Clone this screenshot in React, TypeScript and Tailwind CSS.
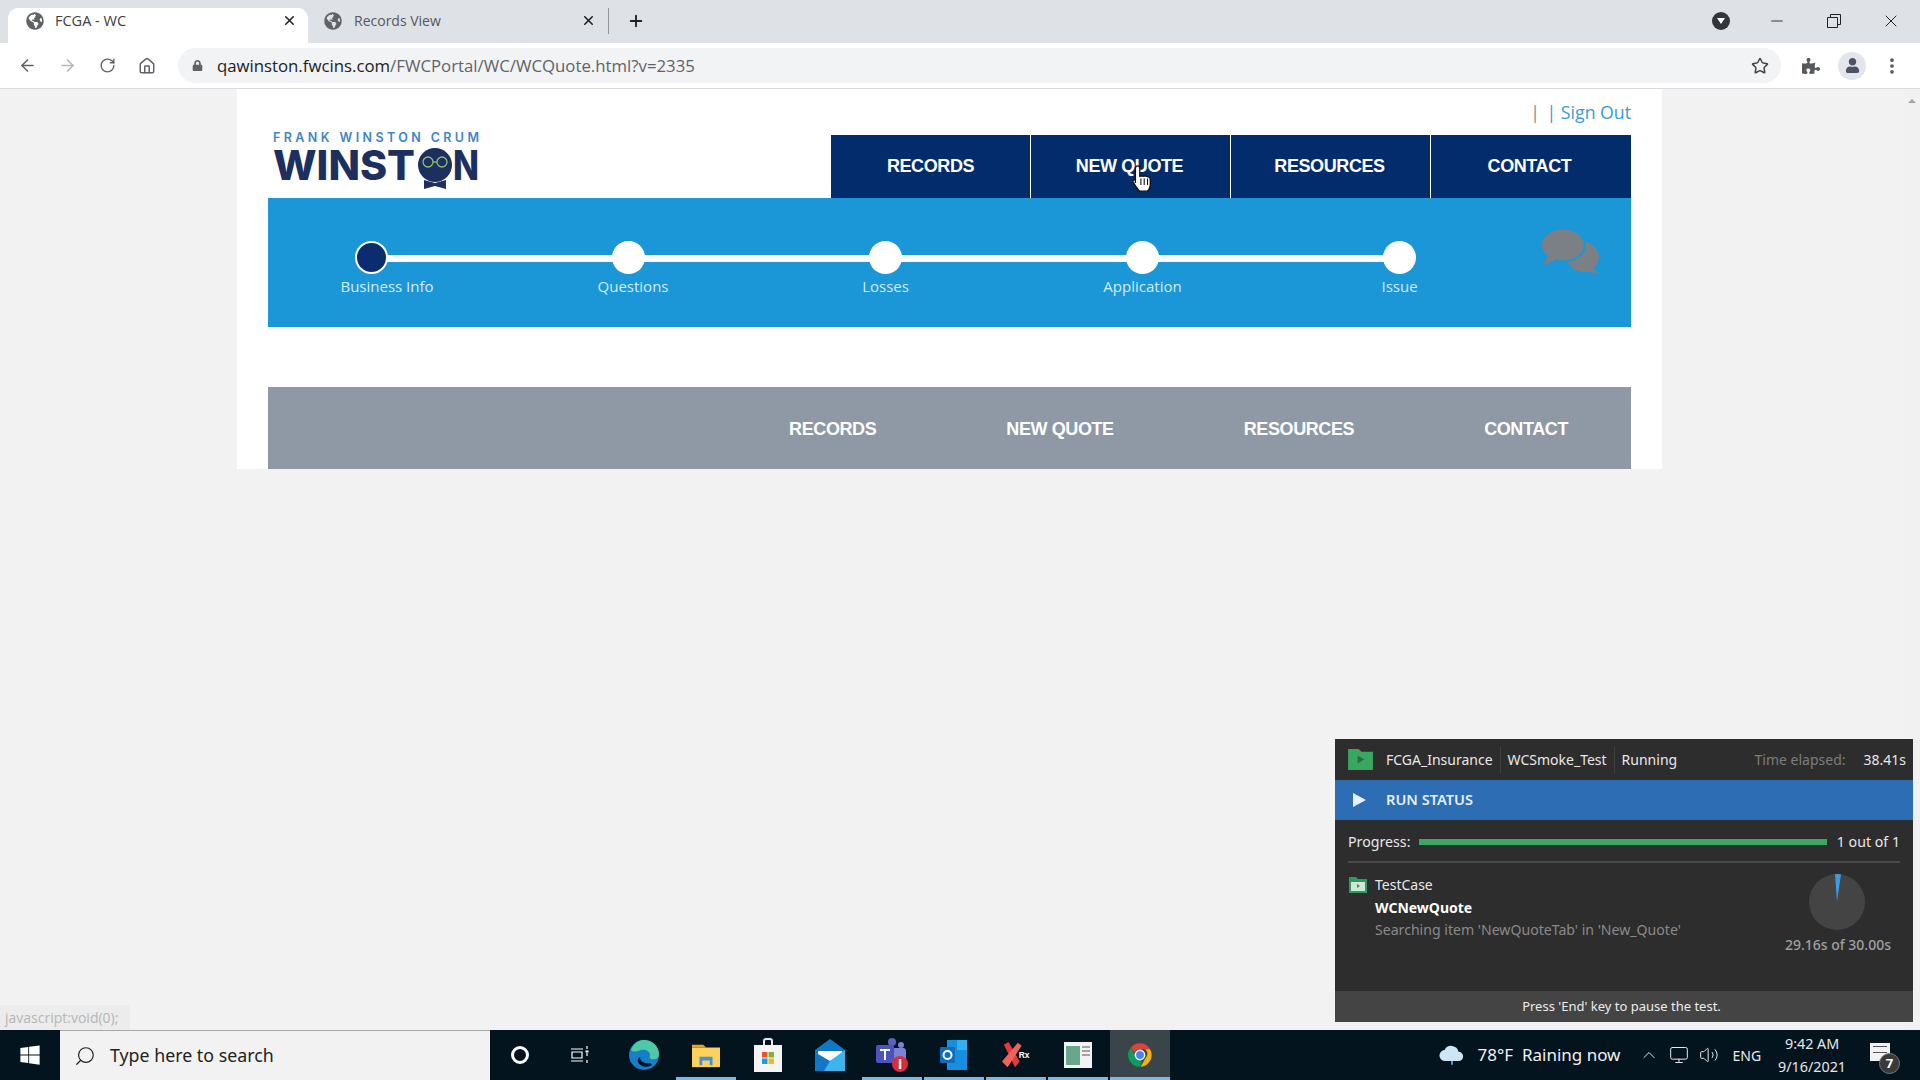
import { ArrowLeft, ArrowRight, ChevronUp, EllipsisVertical, House, Minus, Monitor, Plus, RotateCw, Search, Star, Volume2, X } from 'lucide-react'
import { FaGlobeAmericas, FaLock, FaPuzzlePiece, FaUser, FaWindows } from 'react-icons/fa'

const navItems = ['RECORDS', 'NEW QUOTE', 'RESOURCES', 'CONTACT']
const steps = ['Business Info', 'Questions', 'Losses', 'Application', 'Issue']

function BrowserChrome() {
  return (
    <div className="shrink-0 font-['Open_Sans',sans-serif]">
      <div className="h-[43px] bg-[#dee1e6] flex items-end pl-[8px] pr-[19px]">
        <div className="w-[300px] h-[35px] bg-white rounded-t-[10px] flex items-center pl-[18px] pr-[11px] pb-[10px] pt-0 text-[14.5px] text-[#3c4043]">
          <FaGlobeAmericas className="w-[18px] h-[18px] text-[#5f6368]" />
          <span className="ml-[11px]">FCGA - WC</span>
          <X className="w-[15px] h-[15px] ml-auto text-[#202124]" strokeWidth={2.5} />
        </div>
        <div className="w-[300px] h-[35px] flex items-center pl-[16px] pr-[12px] pb-[10px] text-[14px] text-[#55585d]">
          <FaGlobeAmericas className="w-[18px] h-[18px] text-[#5f6368]" />
          <span className="ml-[12px]">Records View</span>
          <X className="w-[15px] h-[15px] ml-auto text-[#202124]" strokeWidth={2.5} />
        </div>
        <div className="w-px h-[26px] bg-[#8f9296] mb-[9px]"></div>
        <div className="h-[35px] flex items-center ml-[18px] pb-[10px]">
          <Plus className="w-[18px] h-[18px] text-[#202124]" strokeWidth={2.5} />
        </div>
        <div className="ml-auto h-[43px] flex items-center pb-[2px]">
          <div className="w-[18px] h-[18px] rounded-full bg-[#32363a] flex items-center justify-center">
            <div className="w-0 h-0 border-x-[4px] border-x-transparent border-t-[6px] border-t-white"></div>
          </div>
          <Minus className="w-[18px] h-[18px] ml-[38px] text-[#202124]" strokeWidth={1.2} />
          <svg viewBox="0 0 14 14" className="w-[14px] h-[14px] ml-[41px] text-[#202124]" fill="none" stroke="currentColor">
            <path d="M.5 3.500h10v10H.5zM3.500 3.500V.5h10v10h-3" />
          </svg>
          <X className="w-[20px] h-[20px] ml-[40px] text-[#202124]" strokeWidth={1.2} />
        </div>
      </div>
      <div className="h-[46px] bg-white border-b border-[#d8dade] flex items-center pl-[18px] pr-[18px] text-[#5f6368]">
        <ArrowLeft className="w-[19px] h-[19px]" strokeWidth={2} />
        <ArrowRight className="w-[19px] h-[19px] ml-[21px] text-[#b4b6b9]" strokeWidth={2} />
        <RotateCw className="w-[17px] h-[17px] ml-[22px]" strokeWidth={2} />
        <House className="w-[18px] h-[18px] ml-[22px]" strokeWidth={2} />
        <div className="ml-[22px] w-[1606px] h-[35px] rounded-full bg-[#f1f3f4] flex items-center pl-[14px] pr-[12px]">
          <FaLock className="w-[11px] h-[11px] text-[#5f6368]" />
          <span className="ml-[14px] text-[16.8px] text-[#202124]">
            qawinston.fwcins.com<span className="text-[#5f6368]">/FWCPortal/WC/WCQuote.html?v=2335</span>
          </span>
          <Star className="w-[18px] h-[18px] ml-auto text-[#444]" strokeWidth={2} />
        </div>
        <FaPuzzlePiece className="w-[18px] h-[18px] ml-[21px] text-[#55585d]" />
        <div className="w-[28px] h-[28px] rounded-full bg-[#e3e5ec] flex items-center justify-center ml-[18px]">
          <FaUser className="w-[15px] h-[15px] text-[#4c5164]" />
        </div>
        <EllipsisVertical className="w-[20px] h-[20px] ml-[16px] text-[#55585d]" strokeWidth={2.5} />
      </div>
    </div>
  )
}

function Logo() {
  return (
    <svg viewBox="0 0 216 60" className="w-[216px] h-[60px] ml-[4px] self-start -mt-[5px] shrink-0" fontFamily="Inter, sans-serif">
      <text x="1" y="12" fontSize="12.5" fontWeight="600" fill="#3f86c6" textLength="206">FRANK WINSTON CRUM</text>
      <text x="1" y="50" fontSize="41" fontWeight="800" fill="#1d2f5f" textLength="142" lengthAdjust="spacingAndGlyphs">WINST</text>
      <circle cx="163" cy="35" r="17" fill="#1d2f5f" />
      <circle cx="156" cy="32" r="5" fill="none" stroke="#8fc06a" strokeWidth="1.300" />
      <circle cx="170" cy="32" r="5" fill="none" stroke="#8fc06a" strokeWidth="1.300" />
      <path d="M161 32h4" stroke="#8fc06a" strokeWidth="1.300" />
      <path d="M152 50l11 3 11-3v9l-11-3-11 3z" fill="#1d2f5f" />
      <text x="181" y="50" fontSize="41" fontWeight="800" fill="#1d2f5f" textLength="26" lengthAdjust="spacingAndGlyphs">N</text>
    </svg>
  )
}

function Stepper() {
  return (
    <div className="h-[129px] bg-[#1b96d6] flex relative">
      <div className="ml-[87px] mt-[43px] w-[1061px] relative">
        <div className="absolute left-[16px] right-[16px] top-[14px] h-[7px] bg-white"></div>
        <div className="relative flex justify-between">
          {steps.map((step, i) => (
            <div key={step} className="w-[33px] flex flex-col items-center">
              <div className={i === 0 ? 'w-[33px] h-[33px] rounded-full bg-[#0b2c6e] border-2 border-white' : 'w-[33px] h-[33px] rounded-full bg-white'}></div>
              <span className={i === 0 ? 'ml-[31px] mt-[2px] text-[15px] leading-[20px] text-[#d4ecf9] whitespace-nowrap' : i === 1 ? 'ml-[9px] mt-[2px] text-[15px] leading-[20px] text-[#d4ecf9] whitespace-nowrap' : 'mt-[2px] text-[15px] leading-[20px] text-[#d4ecf9] whitespace-nowrap'}>
                {step}
              </span>
            </div>
          ))}
        </div>
      </div>
      <svg viewBox="0 0 60 46" className="absolute left-[1272px] top-[30px] w-[60px] h-[46px]" fill="#7b8084">
        <ellipse cx="43" cy="29" rx="16" ry="15" />
        <path d="M50 38l9 8-14-3z" />
        <ellipse cx="23" cy="17" rx="22" ry="16.500" stroke="#1b96d6" strokeWidth="2" />
        <path d="M8 28L3 38l13-6z" />
      </svg>
    </div>
  )
}

function PageContent() {
  return (
    <div className="flex-1 min-h-0 bg-[#f2f2f2] flex pl-[237px] font-['Open_Sans',sans-serif]">
      <div className="w-[1425px] h-[380px] bg-white px-[31px]">
        <div className="h-[46px] flex items-end justify-end pb-[11px] text-[17.7px] leading-[24px] text-[#3a9bd0]">
          <span className="text-[#8a8a8a]">|</span>
          <span className="ml-[2px]">&nbsp;| Sign Out</span>
        </div>
        <div className="flex items-center justify-between h-[63px]">
          <Logo />
          <div className="flex bg-[#032c6c] h-[63px] font-['Liberation_Sans',sans-serif]">
            {navItems.map((item, i) => (
              <div
                key={item}
                className={i === 0 ? 'w-[199px] flex items-center justify-center text-white text-[18px] font-bold tracking-[-0.4px]' : 'w-[200px] border-l border-white pr-[2px] flex items-center justify-center text-white text-[18px] font-bold tracking-[-0.4px]'}
              >
                {item}
              </div>
            ))}
            <div className="w-px"></div>
          </div>
        </div>
        <Stepper />
        <div className="mt-[60px] h-[82px] pt-[2px] bg-[#8e99a5] flex items-center justify-end gap-[130px] pr-[63px] text-white text-[18px] font-bold tracking-[-0.4px] font-['Liberation_Sans',sans-serif]">
          {navItems.map((item) => (
            <span key={item}>{item}</span>
          ))}
        </div>
      </div>
      <div className="ml-auto w-[17px] bg-[#f1f1f1] flex justify-center pt-[10px]">
        <div className="w-0 h-0 border-x-[4px] border-x-transparent border-b-[4px] border-b-[#a3a3a3]"></div>
      </div>
    </div>
  )
}

function RunStatus() {
  return (
    <div className="absolute left-[1335px] top-[739px] w-[578px] h-[283px] bg-[#2d2d2d] flex flex-col font-['Noto_Sans',sans-serif] text-[14px] text-[#e8e8e8]">
      <div className="h-[41px] shrink-0 flex items-center pl-[13px] pr-[7px]">
        <svg viewBox="0 0 26 22" className="w-[25px] h-[21px]">
          <path d="M0 0h11l3 3h12v19H0z" fill="#38a860" />
          <path d="M10 7l7 4-7 4z" fill="#2c6b45" />
        </svg>
        <span className="ml-[13px]">FCGA_Insurance</span>
        <span className="ml-[7px] h-[26px] w-px bg-[#3f3f3f]"></span>
        <span className="ml-[7px]">WCSmoke_Test</span>
        <span className="ml-[7px] h-[26px] w-px bg-[#3f3f3f]"></span>
        <span className="ml-[7px]">Running</span>
        <span className="ml-auto text-[#7d7d7d]">Time elapsed:</span>
        <span className="ml-[18px]">38.41s</span>
      </div>
      <div className="h-[40px] shrink-0 bg-[#2c6db3] flex items-center pl-[18px] text-white font-semibold">
        <div className="w-0 h-0 border-y-[7px] border-y-transparent border-l-[13px] border-l-[#e8f0f8]"></div>
        <span className="ml-[20px] text-[14.6px] text-[#e6eef7]">RUN STATUS</span>
      </div>
      <div className="h-[43px] pt-[3px] shrink-0 mx-[13px] border-b-2 border-[#4a4a4a] flex items-center text-[14.2px]">
        <span>Progress:</span>
        <div className="ml-[9px] flex-1 h-[6px] bg-[#3aa860]"></div>
        <span className="ml-[10px]">1 out of 1</span>
      </div>
      <div className="flex-1 min-h-0 flex pl-[14px] pr-[22px] pt-[11px]">
        <svg viewBox="0 0 18 16" className="w-[18px] h-[16px] mt-[3px]">
          <path d="M0 0h7l2 2h9v14H0z" fill="#2f9a5a" />
          <rect x="2" y="5" width="14" height="9" fill="#cfe8d8" />
          <path d="M8 7l3 2-3 2z" fill="#2f9a5a" />
        </svg>
        <div className="ml-[8px] leading-[22.5px]">
          <div>TestCase</div>
          <div className="font-bold text-white">WCNewQuote</div>
          <div className="text-[14.1px] text-[#8a8a8a]">Searching item 'NewQuoteTab' in 'New_Quote'</div>
        </div>
        <div className="ml-auto flex flex-col items-center">
          <svg viewBox="0 0 56 56" className="w-[56px] h-[56px] -ml-[2px]">
            <circle cx="28" cy="28" r="28" fill="#444444" />
            <path d="M28 28L26 0a28 28 0 0 1 6 .3z" fill="#3a9be0" />
          </svg>
          <span className="mt-[4px] text-[#a0a0a0] font-medium">29.16s of 30.00s</span>
        </div>
      </div>
      <div className="h-[31px] shrink-0 bg-[#444444] flex items-center justify-center pr-[5px] pt-[1px] text-[13px] text-[#ececec]">
        Press 'End' key to pause the test.
      </div>
    </div>
  )
}

function TaskIcon({ active, running, children }: { active?: boolean; running?: boolean; children: React.ReactNode }) {
  return (
    <div className={active ? 'w-[60px] mr-[2px] h-[50px] bg-[#3a444b] relative flex items-center justify-center' : 'w-[60px] mr-[2px] h-[50px] relative flex items-center justify-center'}>
      {children}
      {running && <div className="absolute bottom-0 inset-x-0 h-[3px] bg-[#76b9ed]"></div>}
    </div>
  )
}

function Taskbar() {
  return (
    <div className="h-[50px] shrink-0 bg-[#04141f] flex items-center text-white font-['Noto_Sans',sans-serif]">
      <div className="w-[60px] flex justify-center">
        <FaWindows className="w-[22px] h-[22px]" />
      </div>
      <div className="w-[430px] h-[50px] bg-[#f2f2f2] border-t border-[#a8a8a8] flex items-center pl-[14px] text-[#222] text-[17.8px]">
        <Search className="w-[22px] h-[22px] -scale-x-100 text-[#222]" strokeWidth={1.3} />
        <span className="ml-[14px]">Type here to search</span>
      </div>
      <div className="w-[60px] flex justify-center">
        <div className="w-[18px] h-[18px] rounded-full border-[3px] border-white"></div>
      </div>
      <div className="w-[64px] pr-[5px] flex justify-center">
        <svg viewBox="0 0 20 20" className="w-[20px] h-[20px]" fill="none" stroke="white" strokeWidth="1.2">
          <path d="M1 4h12M1 16h12M2 7h10v6H2zM17 1v3M17 8v3M17 15v3" />
          <rect x="15.500" y="5.500" width="3" height="2" fill="white" stroke="none" />
        </svg>
      </div>
      <TaskIcon>
        <svg viewBox="0 0 32 32" className="w-[32px] h-[32px]">
          <circle cx="16" cy="16" r="15" fill="#1580c9" />
          <path d="M3 11C6 3 12 1 16 1c8 0 15 6 15 14 0 5-5 6-8 5-2-1-1-3-1-4 0-4-5-6-9-5-4 1-7 3-10 0z" fill="#4ec9a6" />
          <path d="M12 18c0 5 5 7 10 6l2 2c-5 3-12 2-14-3-1-2 0-4 2-5z" fill="#04141f" />
        </svg>
      </TaskIcon>
      <TaskIcon running>
        <svg viewBox="0 0 30 26" className="w-[28px] h-[26px]">
          <path d="M0 2h12l3 3H0z" fill="#e7a520" />
          <rect y="5" width="30" height="21" fill="#fbd35c" />
          <path d="M8 15h14v9h-3v-5h-8v5H8z" fill="#4a90d0" />
        </svg>
      </TaskIcon>
      <TaskIcon>
        <svg viewBox="0 0 30 34" className="w-[30px] h-[34px]">
          <path d="M11 8V3a2 2 0 0 1 2-2h4a2 2 0 0 1 2 2v5" fill="none" stroke="#e8e8e8" strokeWidth="2" />
          <path d="M1 7h28v27H1z" fill="#f4f4f4" />
          <rect x="9" y="14" width="5.500" height="5.500" fill="#e8542f" />
          <rect x="15.500" y="14" width="5.500" height="5.500" fill="#7cb82f" />
          <rect x="9" y="20.500" width="5.500" height="5.500" fill="#1b9de2" />
          <rect x="15.500" y="20.500" width="5.500" height="5.500" fill="#f5b81d" />
        </svg>
      </TaskIcon>
      <TaskIcon>
        <svg viewBox="0 0 30 32" className="w-[30px] h-[32px]">
          <path d="M15 0l15 11v21H0V11z" fill="#1079c6" />
          <path d="M3 12h24v3L15 22 3 15z" fill="#ffffff" />
          <path d="M15 22l15-11v21H9z" fill="#3db4ee" />
        </svg>
      </TaskIcon>
      <TaskIcon running>
        <svg viewBox="0 0 34 36" className="w-[34px] h-[36px]">
          <circle cx="17" cy="5" r="4" fill="#5b62c4" />
          <circle cx="26" cy="8" r="3" fill="#7b83d6" />
          <rect x="13" y="11" width="18" height="14" rx="3" fill="#7b83d6" />
          <rect x="1" y="8" width="18" height="18" rx="2" fill="#4b53bc" />
          <path d="M5 12h10v2h-4v9H9v-9H5z" fill="white" />
          <circle cx="25" cy="27" r="8" fill="#d92d3f" />
          <path d="M25 22v10" stroke="white" strokeWidth="2.500" />
        </svg>
      </TaskIcon>
      <TaskIcon running>
        <svg viewBox="0 0 30 32" className="w-[30px] h-[32px]">
          <rect x="8" y="1" width="20" height="30" fill="#1490df" />
          <rect x="18" y="1" width="10" height="10" fill="#33b1f0" />
          <rect x="1" y="8" width="15" height="16" rx="1" fill="#0f6cbd" />
          <circle cx="8.500" cy="16" r="4" fill="none" stroke="white" strokeWidth="2" />
        </svg>
      </TaskIcon>
      <TaskIcon running>
        <svg viewBox="0 0 32 30" className="w-[30px] h-[28px]">
          <path d="M3 4l5-3 12 21-5 6z" fill="#e5393f" />
          <path d="M1 22L18 2l4 3L7 28z" fill="#f2625a" />
          <text x="19" y="18" fill="white" fontSize="9" fontWeight="700" fontFamily="Liberation Sans">Rx</text>
        </svg>
      </TaskIcon>
      <TaskIcon running>
        <svg viewBox="0 0 28 26" className="w-[28px] h-[26px]">
          <rect width="28" height="26" fill="#f2f2f2" />
          <rect x="2" y="4" width="14" height="19" fill="#6aa68c" />
          <path d="M18 5h8M18 9h8M18 13h8" stroke="#555" strokeWidth="1.2" />
        </svg>
      </TaskIcon>
      <TaskIcon running active>
        <svg viewBox="0 0 48 48" className="w-[28px] h-[28px]">
          <path d="M24 4a20 20 0 0 1 17.300 10H24a10 10 0 0 0-9.400 6.600L8.200 11.500A20 20 0 0 1 24 4z" fill="#db4437" />
          <path d="M41.300 14A20 20 0 0 1 25 44l8.600-15A10 10 0 0 0 33 14z" fill="#f4b400" />
          <path d="M25 44A20 20 0 0 1 8.200 11.500L16 25a10 10 0 0 0 11 8.700z" fill="#0f9d58" />
          <circle cx="24" cy="24" r="8" fill="#4285f4" stroke="white" strokeWidth="2.500" />
        </svg>
      </TaskIcon>
      <div className="ml-auto flex items-center h-[50px] pr-[30px]">
        <svg viewBox="0 0 28 22" className="w-[26px] h-[21px]" fill="#cde5f5">
          <path d="M7 17a6 6 0 0 1-1-12 8 8 0 0 1 15 2 5 5 0 0 1 0 10z" />
          <path d="M13 17h2v4h-2z" fill="#5aa0d8" />
        </svg>
        <span className="ml-[13px] text-[17px] text-[#f0f0f0] whitespace-nowrap">78°F&nbsp; Raining now</span>
        <ChevronUp className="w-[20px] h-[20px] ml-[19px] text-[#e8e8e8]" strokeWidth={1.2} />
        <Monitor className="w-[20px] h-[20px] ml-[10px] text-[#e8e8e8]" strokeWidth={1.2} />
        <Volume2 className="w-[20px] h-[20px] ml-[10px] text-[#e8e8e8]" strokeWidth={1.2} />
        <span className="ml-[13px] text-[14px] text-[#e8e8e8]">ENG</span>
        <div className="ml-[17px] text-[14.3px] leading-[23px] text-[#e8e8e8] text-center">
          <div>9:42 AM</div>
          <div>9/16/2021</div>
        </div>
        <div className="ml-[24px] relative w-[20px] h-[18px] bg-[#f2f2f2] mb-[6px]">
          <div className="absolute left-[3px] right-[3px] top-[3px] h-[7px] border-y border-[#555]"></div>
          <div className="absolute -right-[10px] -bottom-[13px] w-[21px] h-[21px] rounded-full bg-[#3a3a3a] border border-[#777] text-[13px] leading-[19px] text-center font-bold text-white">7</div>
        </div>
      </div>
    </div>
  )
}

export default function App() {
  return (
    <div className="w-[1920px] h-[1080px] relative overflow-hidden flex flex-col">
      <BrowserChrome />
      <PageContent />
      <Taskbar />
      <RunStatus />
      <div className="absolute left-0 top-[1005px] w-[130px] h-[25px] bg-[#ececec] pl-[5px] text-[14px] leading-[25px] text-[#b5b5b5] font-['Open_Sans',sans-serif]">
        javascript:void(0);
      </div>
      <svg viewBox="0 0 20 26" className="absolute left-[1131px] top-[164px] w-[22px] h-[29px]">
        <path d="M6 1.500c1 0 2 1 2 2V11l1.500-.5 1.500.5 1.500-.5 1.500.5 2 .5c1 .5 1.500 1 1.500 2.500v5c0 2-1.500 5-3 5.500H8c-1.500-1-4-5-6-8-1-1.500.5-3 2-2L4 17V3.500c0-1 1-2 2-2z" fill="white" stroke="#111" strokeWidth="1.200" />
        <path d="M9 13v6M12 13v6M15 13v6" stroke="#111" strokeWidth="1" />
      </svg>
    </div>
  )
}
